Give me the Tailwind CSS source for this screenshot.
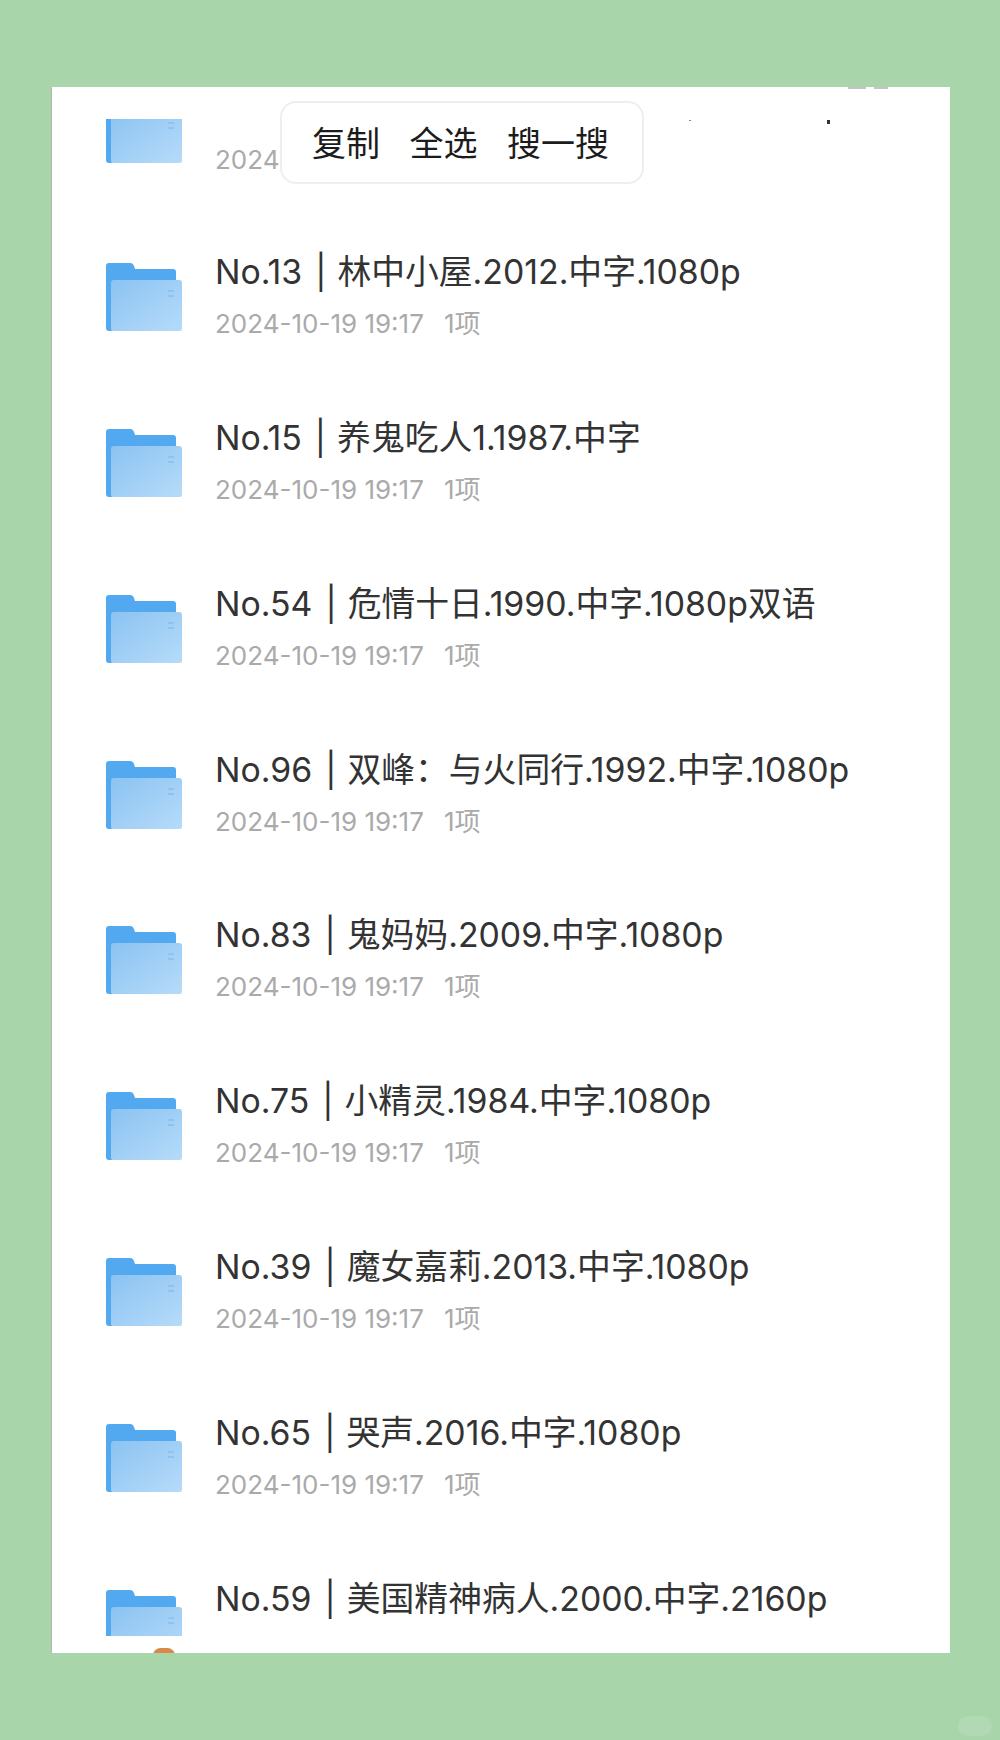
<!DOCTYPE html>
<html lang="zh-CN">
<head>
  <meta charset="UTF-8">
  <meta name="viewport" content="width=device-width, initial-scale=1.0">
  <title>文件列表</title>
  <script src="https://cdn.jsdelivr.net/npm/@tailwindcss/browser@4"></script>
</head>
<body class="bg-[#a8d5aa] font-['Inter','Noto_Sans_CJK_SC',sans-serif]">

  <svg width="0" height="0" class="absolute">
    <defs>
      <linearGradient id="front" x1="0" y1="0" x2="1" y2="1">
        <stop offset="0" stop-color="#8bc3f2"/>
        <stop offset="1" stop-color="#b6dbf9"/>
      </linearGradient>
      <symbol id="folder" viewBox="0 0 76 68">
        <path d="M0 3q0-3 3-3h21q3 0 4 3l1 3h38q3 0 3 3v10H6v49H3q-3 0-3-3z" fill="#52a9ef"/>
        <path d="M5 20q0-3 3-3h65q3 0 3 3v46q0 2-2 2H7q-2 0-2-2z" fill="url(#front)"/>
        <path d="M62 28h6M62 33h6" stroke="#8fc2ee" stroke-width="2"/>
      </symbol>
    </defs>
  </svg>

  <div class="h-[1740px] pt-[87px] pl-[51px] overflow-hidden">
    <div class="relative w-[899px] h-[1566px] bg-white border-l border-[#b5b5b5] overflow-hidden">

      <!-- selection menu -->
      <div class="absolute z-10 left-[228px] top-[14px] w-[364px] h-[83px] flex items-center gap-[29.5px] pl-[30px] pt-[2px] bg-white border-2 border-[#eeeeee] rounded-[16px] text-[34px] text-[#1c1c1c]">
        <span>复制</span><span>全选</span><span>搜一搜</span>
      </div>

      <!-- bits of the status bar showing through -->
      <div class="absolute top-0 left-[796px] flex gap-[8px]">
        <div class="w-[18px] h-[2px] bg-[#c4c4c4]"></div>
        <div class="w-[14px] h-[2px] bg-[#c4c4c4]"></div>
      </div>
      <div class="absolute top-[33px] left-[637px] w-[2px] h-[1px] bg-[#888888]"></div>
      <div class="absolute top-[33px] left-[775px] w-[3px] h-[4px] bg-[#333333]"></div>

      <div class="-mt-[31px] pl-[54px]">

        <div class="h-[165.9px] flex items-start gap-[33px]">
          <div class="mt-[63px] w-[76px] h-[44px] overflow-hidden flex items-end shrink-0">
            <svg class="w-[76px] h-[68px] shrink-0"><use href="#folder"/></svg>
          </div>
          <div class="pt-[86px]">
            <p class="text-[26px] leading-[36px] text-[#aaaaaa]">2024</p>
          </div>
        </div>

        <div class="h-[165.9px] flex items-start gap-[33px]">
          <svg class="mt-[41px] w-[76px] h-[68px] shrink-0"><use href="#folder"/></svg>
          <div class="pt-[27px]">
            <p class="text-[33.8px] leading-[46px] text-[#333333]">No.13<span class="ml-[13px] mr-[11px]">|</span>林中小屋.2012.中字.1080p</p>
            <p class="mt-[11px] text-[26px] leading-[36px] text-[#aaaaaa]">2024-10-19 19:17<span class="ml-[20px]">1项</span></p>
          </div>
        </div>

        <div class="h-[165.9px] flex items-start gap-[33px]">
          <svg class="mt-[41px] w-[76px] h-[68px] shrink-0"><use href="#folder"/></svg>
          <div class="pt-[27px]">
            <p class="text-[33.8px] leading-[46px] text-[#333333]">No.15<span class="ml-[13px] mr-[11px]">|</span>养鬼吃人1.1987.中字</p>
            <p class="mt-[11px] text-[26px] leading-[36px] text-[#aaaaaa]">2024-10-19 19:17<span class="ml-[20px]">1项</span></p>
          </div>
        </div>

        <div class="h-[165.9px] flex items-start gap-[33px]">
          <svg class="mt-[41px] w-[76px] h-[68px] shrink-0"><use href="#folder"/></svg>
          <div class="pt-[27px]">
            <p class="text-[33.8px] leading-[46px] text-[#333333]">No.54<span class="ml-[13px] mr-[11px]">|</span>危情十日.1990.中字.1080p双语</p>
            <p class="mt-[11px] text-[26px] leading-[36px] text-[#aaaaaa]">2024-10-19 19:17<span class="ml-[20px]">1项</span></p>
          </div>
        </div>

        <div class="h-[165.9px] flex items-start gap-[33px]">
          <svg class="mt-[41px] w-[76px] h-[68px] shrink-0"><use href="#folder"/></svg>
          <div class="pt-[27px]">
            <p class="text-[33.8px] leading-[46px] text-[#333333]">No.96<span class="ml-[13px] mr-[11px]">|</span>双峰：与火同行.1992.中字.1080p</p>
            <p class="mt-[11px] text-[26px] leading-[36px] text-[#aaaaaa]">2024-10-19 19:17<span class="ml-[20px]">1项</span></p>
          </div>
        </div>

        <div class="h-[165.9px] flex items-start gap-[33px]">
          <svg class="mt-[41px] w-[76px] h-[68px] shrink-0"><use href="#folder"/></svg>
          <div class="pt-[27px]">
            <p class="text-[33.8px] leading-[46px] text-[#333333]">No.83<span class="ml-[13px] mr-[11px]">|</span>鬼妈妈.2009.中字.1080p</p>
            <p class="mt-[11px] text-[26px] leading-[36px] text-[#aaaaaa]">2024-10-19 19:17<span class="ml-[20px]">1项</span></p>
          </div>
        </div>

        <div class="h-[165.9px] flex items-start gap-[33px]">
          <svg class="mt-[41px] w-[76px] h-[68px] shrink-0"><use href="#folder"/></svg>
          <div class="pt-[27px]">
            <p class="text-[33.8px] leading-[46px] text-[#333333]">No.75<span class="ml-[13px] mr-[11px]">|</span>小精灵.1984.中字.1080p</p>
            <p class="mt-[11px] text-[26px] leading-[36px] text-[#aaaaaa]">2024-10-19 19:17<span class="ml-[20px]">1项</span></p>
          </div>
        </div>

        <div class="h-[165.9px] flex items-start gap-[33px]">
          <svg class="mt-[41px] w-[76px] h-[68px] shrink-0"><use href="#folder"/></svg>
          <div class="pt-[27px]">
            <p class="text-[33.8px] leading-[46px] text-[#333333]">No.39<span class="ml-[13px] mr-[11px]">|</span>魔女嘉莉.2013.中字.1080p</p>
            <p class="mt-[11px] text-[26px] leading-[36px] text-[#aaaaaa]">2024-10-19 19:17<span class="ml-[20px]">1项</span></p>
          </div>
        </div>

        <div class="h-[165.9px] flex items-start gap-[33px]">
          <svg class="mt-[41px] w-[76px] h-[68px] shrink-0"><use href="#folder"/></svg>
          <div class="pt-[27px]">
            <p class="text-[33.8px] leading-[46px] text-[#333333]">No.65<span class="ml-[13px] mr-[11px]">|</span>哭声.2016.中字.1080p</p>
            <p class="mt-[11px] text-[26px] leading-[36px] text-[#aaaaaa]">2024-10-19 19:17<span class="ml-[20px]">1项</span></p>
          </div>
        </div>

        <div class="h-[165.9px] flex items-start gap-[33px]">
          <div class="mt-[41px] w-[76px] h-[46px] overflow-hidden shrink-0">
            <svg class="w-[76px] h-[68px]"><use href="#folder"/></svg>
          </div>
          <div class="pt-[27px]">
            <p class="text-[33.8px] leading-[46px] text-[#333333]">No.59<span class="ml-[13px] mr-[11px]">|</span>美国精神病人.2000.中字.2160p</p>
          </div>
        </div>
      </div>

      <!-- top of the avatar cut off by the bottom edge -->
      <div class="absolute left-[101px] bottom-[-10px] w-[22px] h-[15px] rounded-full bg-[#d98a4a]"></div>
    </div>
  </div>

  <!-- watermark -->
  <div class="absolute left-[958px] top-[1716px] w-[34px] h-[20px] rounded-full bg-white/10"></div>

</body>
</html>
